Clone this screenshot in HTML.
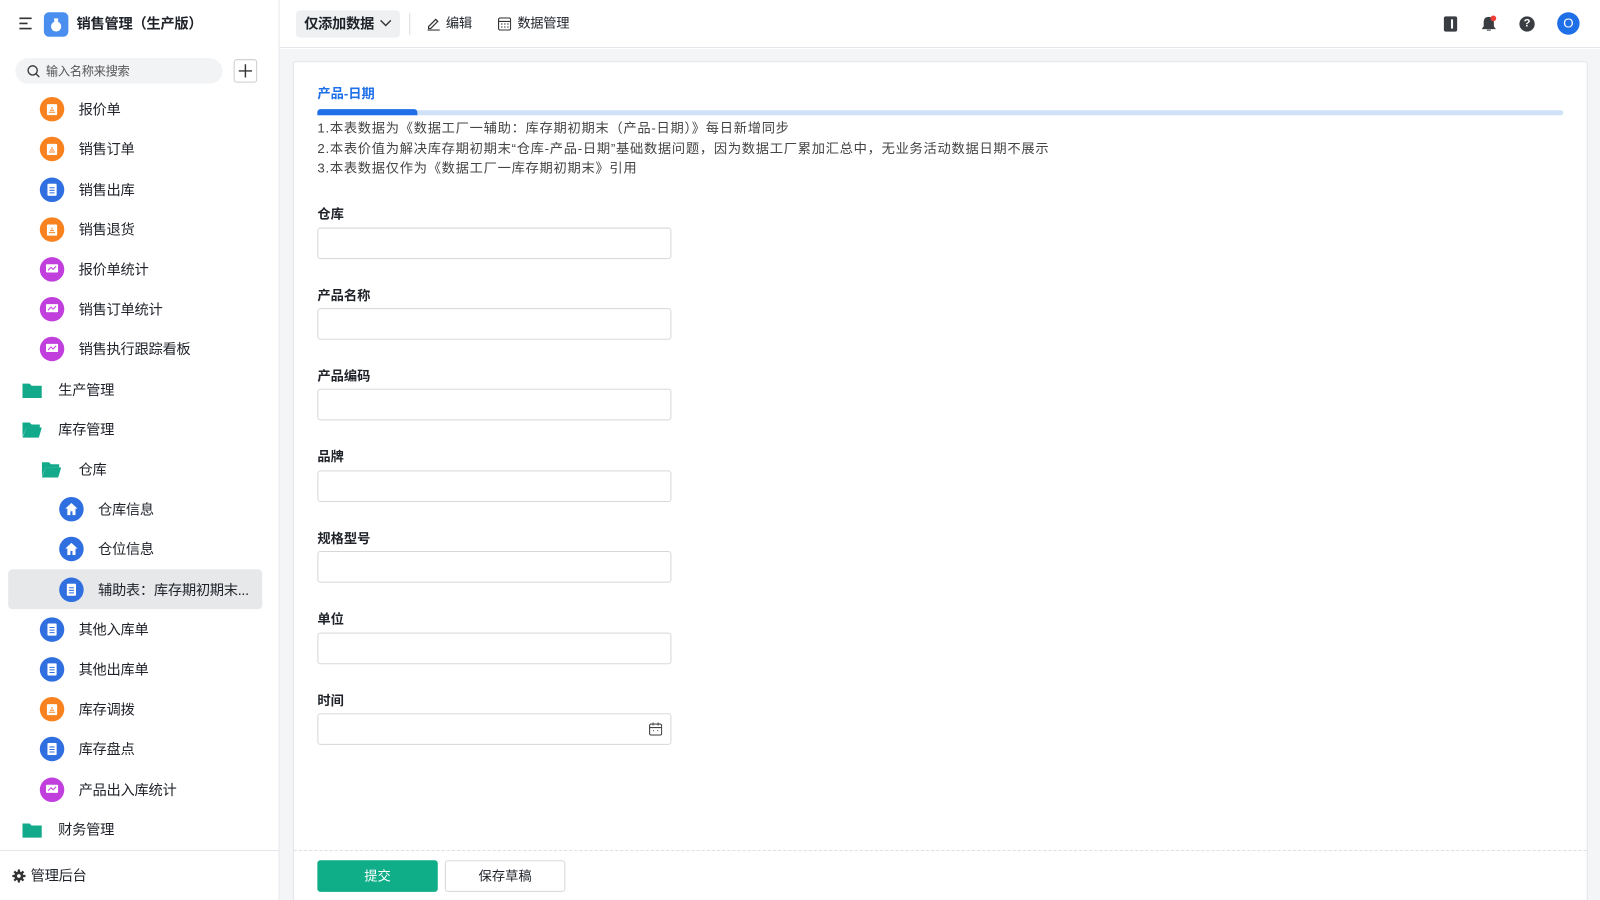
<!DOCTYPE html>
<html><head><meta charset="utf-8"><style>
*{box-sizing:border-box;margin:0;padding:0}
html,body{width:1600px;height:900px;overflow:hidden;background:#fff}
body{font-family:"Liberation Sans","Noto Sans CJK SC",sans-serif;color:#1f2329}
#w{position:absolute;left:0;top:0;width:1568px;height:882px;transform:scale(1.02041);transform-origin:0 0;overflow:hidden}
.a{position:absolute}
.side{left:0;top:0;width:274px;height:882px;border-right:1px solid #e5e6eb;background:#fff}
.it{position:absolute;font-size:14px;line-height:20px;color:#1f2329;letter-spacing:-0.3px}
.ic{position:absolute;width:24px;height:24px;border-radius:50%}
.ic svg{position:absolute;left:6px;top:6px}
.lbl{position:absolute;left:311px;font-size:13px;font-weight:bold;color:#1f2329}
.inp{position:absolute;left:311px;width:347px;height:31px;border:1px solid #d6d8dc;border-radius:3px;background:#fff}
</style></head><body><div id="w">
<!-- sidebar -->
<div class="a side">
 <svg class="a" style="left:18px;top:16px" width="15" height="14" viewBox="0 0 15 14"><path d="M1 2h12M1 7h8M1 12h12" stroke="#333" stroke-width="1.6"/></svg>
 <div class="a" style="left:43px;top:12px;width:24px;height:24px;border-radius:5px;background:#4a8ef0"><svg width="24" height="24"><circle cx="12" cy="14" r="5" fill="#fff"/><rect x="10" y="6" width="4" height="3" fill="#fff"/></svg></div>
 <div class="it" style="left:75px;top:13px;font-weight:bold">销售管理（生产版）</div>
 <div class="a" style="left:15px;top:57px;width:203px;height:25px;border-radius:13px;background:#f2f3f5"></div>
 <svg class="a" style="left:26px;top:63px" width="14" height="14"><circle cx="6" cy="6" r="4.5" stroke="#333" stroke-width="1.3" fill="none"/><path d="M9.5 9.5l3 3" stroke="#333" stroke-width="1.3"/></svg>
 <div class="it" style="left:45px;top:60px;font-size:12px;color:#555">输入名称来搜索</div>
 <div class="a" style="left:229px;top:58px;width:23px;height:23px;border:1px solid #ccc;border-radius:3px"><svg width="21" height="21"><path d="M10.5 4v13M4 10.5h13" stroke="#333" stroke-width="1.4"/></svg></div>

 <div class="a" style="left:8px;top:558px;width:249px;height:39px;border-radius:4px;background:#e7e8ea"></div>

 <div class="ic" style="left:39px;top:95px;background:#f7821f"><svg width="12" height="12"><rect x="1" y="1" width="10" height="11" rx="1" fill="#fff"/><path d="M6 4v2M3 9h6M4 7h4" stroke="#f7821f"/></svg></div><div class="it" style="left:77px;top:97px">报价单</div>
 <div class="ic" style="left:39px;top:134px;background:#f7821f"><svg width="12" height="12"><rect x="1" y="1" width="10" height="11" rx="1" fill="#fff"/><path d="M6 4v2M3 9h6M4 7h4" stroke="#f7821f"/></svg></div><div class="it" style="left:77px;top:136px">销售订单</div>
 <div class="ic" style="left:39px;top:174px;background:#2f6fe0"><svg width="12" height="12"><rect x="1.5" y="0" width="9" height="12" rx="1" fill="#fff"/><path d="M3.5 4h5M3.5 6.5h5M3.5 9h5" stroke="#2f6fe0"/></svg></div><div class="it" style="left:77px;top:176px">销售出库</div>
 <div class="ic" style="left:39px;top:213px;background:#f7821f"><svg width="12" height="12"><rect x="1" y="1" width="10" height="11" rx="1" fill="#fff"/><path d="M6 4v2M3 9h6M4 7h4" stroke="#f7821f"/></svg></div><div class="it" style="left:77px;top:215px">销售退货</div>
 <div class="ic" style="left:39px;top:252px;background:#c13fdc"><svg width="12" height="12"><rect x="0" y="1" width="12" height="8" rx="1" fill="#fff"/><path d="M2 7l3-3 2 2 3-3M6 9v2M3 11.5h6" stroke="#c13fdc" fill="none"/></svg></div><div class="it" style="left:77px;top:254px">报价单统计</div>
 <div class="ic" style="left:39px;top:291px;background:#c13fdc"><svg width="12" height="12"><rect x="0" y="1" width="12" height="8" rx="1" fill="#fff"/><path d="M2 7l3-3 2 2 3-3M6 9v2M3 11.5h6" stroke="#c13fdc" fill="none"/></svg></div><div class="it" style="left:77px;top:293px">销售订单统计</div>
 <div class="ic" style="left:39px;top:330px;background:#c13fdc"><svg width="12" height="12"><rect x="0" y="1" width="12" height="8" rx="1" fill="#fff"/><path d="M2 7l3-3 2 2 3-3M6 9v2M3 11.5h6" stroke="#c13fdc" fill="none"/></svg></div><div class="it" style="left:77px;top:332px">销售执行跟踪看板</div>

 <svg class="a" style="left:22px;top:374px" width="19" height="16"><path d="M0 2h7l2 2h10v12H0z" fill="#13a98b"/></svg><div class="it" style="left:57px;top:372px">生产管理</div>
 <svg class="a" style="left:22px;top:413px" width="19" height="16"><path d="M0 1h7l2 2h8v3H4L0 15z" fill="#13a98b"/><path d="M4 6h15l-3 10H0z" fill="#13a98b"/></svg><div class="it" style="left:57px;top:411px">库存管理</div>
 <svg class="a" style="left:41px;top:452px" width="19" height="16"><path d="M0 1h7l2 2h8v3H4L0 15z" fill="#13a98b"/><path d="M4 6h15l-3 10H0z" fill="#13a98b"/></svg><div class="it" style="left:77px;top:450px">仓库</div>
 <div class="ic" style="left:58px;top:487px;background:#2f6fe0"><svg width="12" height="12"><path d="M6 0L0 5.5h2V12h3V8h2v4h3V5.5h2z" fill="#fff"/></svg></div><div class="it" style="left:96px;top:489px">仓库信息</div>
 <div class="ic" style="left:58px;top:526px;background:#2f6fe0"><svg width="12" height="12"><path d="M6 0L0 5.5h2V12h3V8h2v4h3V5.5h2z" fill="#fff"/></svg></div><div class="it" style="left:96px;top:528px">仓位信息</div>
 <div class="ic" style="left:58px;top:566px;background:#2f6fe0"><svg width="12" height="12"><rect x="1.5" y="0" width="9" height="12" rx="1" fill="#fff"/><path d="M3.5 4h5M3.5 6.5h5M3.5 9h5" stroke="#2f6fe0"/></svg></div><div class="it" style="left:96px;top:568px">辅助表：库存期初期末...</div>
 <div class="ic" style="left:39px;top:605px;background:#2f6fe0"><svg width="12" height="12"><rect x="1.5" y="0" width="9" height="12" rx="1" fill="#fff"/><path d="M3.5 4h5M3.5 6.5h5M3.5 9h5" stroke="#2f6fe0"/></svg></div><div class="it" style="left:77px;top:607px">其他入库单</div>
 <div class="ic" style="left:39px;top:644px;background:#2f6fe0"><svg width="12" height="12"><rect x="1.5" y="0" width="9" height="12" rx="1" fill="#fff"/><path d="M3.5 4h5M3.5 6.5h5M3.5 9h5" stroke="#2f6fe0"/></svg></div><div class="it" style="left:77px;top:646px">其他出库单</div>
 <div class="ic" style="left:39px;top:683px;background:#f7821f"><svg width="12" height="12"><rect x="1" y="1" width="10" height="11" rx="1" fill="#fff"/><path d="M6 4v2M3 9h6M4 7h4" stroke="#f7821f"/></svg></div><div class="it" style="left:77px;top:685px">库存调拨</div>
 <div class="ic" style="left:39px;top:722px;background:#2f6fe0"><svg width="12" height="12"><rect x="1.5" y="0" width="9" height="12" rx="1" fill="#fff"/><path d="M3.5 4h5M3.5 6.5h5M3.5 9h5" stroke="#2f6fe0"/></svg></div><div class="it" style="left:77px;top:724px">库存盘点</div>
 <div class="ic" style="left:39px;top:762px;background:#c13fdc"><svg width="12" height="12"><rect x="0" y="1" width="12" height="8" rx="1" fill="#fff"/><path d="M2 7l3-3 2 2 3-3M6 9v2M3 11.5h6" stroke="#c13fdc" fill="none"/></svg></div><div class="it" style="left:77px;top:764px">产品出入库统计</div>
 <svg class="a" style="left:22px;top:805px" width="19" height="16"><path d="M0 2h7l2 2h10v12H0z" fill="#13a98b"/></svg><div class="it" style="left:57px;top:803px">财务管理</div>

 <div class="a" style="left:0;top:833px;width:273px;border-top:1px solid #e5e6eb"></div>
 <svg class="a" style="left:12px;top:852px" width="13" height="13" viewBox="0 0 13 13"><circle cx="6.5" cy="6.5" r="4.5" fill="#333"/><path d="M6.5 0v13M0 6.5h13M2 2l9 9M11 2l-9 9" stroke="#333" stroke-width="2.2"/><circle cx="6.5" cy="6.5" r="1.8" fill="#fff"/></svg>
 <div class="it" style="left:30px;top:848px">管理后台</div>
</div>

<!-- topbar -->
<div class="a" style="left:274px;top:0;width:1294px;height:47px;border-bottom:1px solid #e5e6eb;background:#fff"></div>
<div class="a" style="left:290px;top:10px;width:102px;height:27px;border-radius:4px;background:#eef0f2"></div>
<div class="it" style="left:298px;top:13px;font-weight:bold">仅添加数据</div>
<svg class="a" style="left:372px;top:19px" width="12" height="8"><path d="M1 1l5 5 5-5" stroke="#333" stroke-width="1.4" fill="none"/></svg>
<div class="a" style="left:401px;top:13px;height:21px;border-left:1px solid #ddd"></div>
<svg class="a" style="left:418px;top:16px" width="14" height="14"><path d="M2 10l7-7 2 2-7 7H2zM1 13.5h12" stroke="#333" stroke-width="1.2" fill="none"/></svg>
<div class="it" style="left:437px;top:13px;font-size:13px">编辑</div>
<svg class="a" style="left:488px;top:17px" width="13" height="13"><rect x="0.6" y="0.6" width="11.8" height="11.8" rx="1.5" stroke="#333" fill="none" stroke-width="1.1"/><path d="M0.6 4h12M3 6.5h1.5M6 6.5h1.5M9 6.5h1.5M3 9.5h1.5M6 9.5h1.5M9 9.5h1.5" stroke="#333"/></svg>
<div class="it" style="left:507px;top:13px;font-size:13px">数据管理</div>
<div class="a" style="left:1415px;top:16px;width:13px;height:15px;border-radius:2px;background:#3a3d42"><div class="a" style="left:7px;top:3px;width:2px;height:9px;background:#fff"></div></div>
<svg class="a" style="left:1452px;top:15px" width="15" height="17"><path d="M7 2c-3 0-4.5 2-4.5 5v4L1 13h12l-1.5-2V7C11.5 4 10 2 7 2zM5 14.5h4" fill="#3a3d42" stroke="#3a3d42"/><circle cx="11.5" cy="3" r="2.8" fill="#ef3e36"/></svg>
<div class="a" style="left:1489px;top:16px;width:15px;height:15px;border-radius:50%;background:#3a3d42;color:#fff;font-size:11px;font-weight:bold;text-align:center;line-height:15px">?</div>
<div class="a" style="left:1526px;top:12px;width:22px;height:22px;border-radius:50%;background:#1e6fe8;color:#fff;font-size:13px;text-align:center;line-height:22px">O</div>

<!-- content -->
<div class="a" style="left:274px;top:48px;width:1294px;height:834px;background:#f4f5f6"></div>
<div class="a" style="left:287px;top:60px;width:1269px;height:830px;background:#fff;border:1px solid #e3e5e8;border-radius:3px"></div>
<div class="it" style="left:311px;top:82px;font-size:13px;font-weight:bold;color:#1e6fe8;letter-spacing:0">产品-日期</div>
<div class="a" style="left:311px;top:108px;width:1221px;height:5px;border-radius:3px;background:#cfe0f7"></div>
<div class="a" style="left:311px;top:107px;width:98px;height:6px;border-radius:3px 3px 0 0;background:#1e6fe8"></div>
<div class="it" style="left:311px;top:116px;font-size:13px;line-height:19.5px;color:#444;letter-spacing:0.7px">1.本表数据为《数据工厂一辅助：库存期初期末（产品-日期）》每日新增同步<br>2.本表价值为解决库存期初期末“仓库-产品-日期”基础数据问题，因为数据工厂累加汇总中，无业务活动数据日期不展示<br>3.本表数据仅作为《数据工厂一库存期初期末》引用</div>

<div class="lbl" style="top:199px">仓库</div><div class="inp" style="top:223px"></div>
<div class="lbl" style="top:279px">产品名称</div><div class="inp" style="top:302px"></div>
<div class="lbl" style="top:358px">产品编码</div><div class="inp" style="top:381px"></div>
<div class="lbl" style="top:437px">品牌</div><div class="inp" style="top:461px"></div>
<div class="lbl" style="top:517px">规格型号</div><div class="inp" style="top:540px"></div>
<div class="lbl" style="top:596px">单位</div><div class="inp" style="top:620px"></div>
<div class="lbl" style="top:676px">时间</div><div class="inp" style="top:699px"></div>
<svg class="a" style="left:636px;top:708px" width="13" height="13"><rect x="0.6" y="1.6" width="11.8" height="10.8" rx="1.5" stroke="#444" fill="none" stroke-width="1.1"/><path d="M0.6 5h12M4 0v3M9 0v3M4 8h1M8 8h1" stroke="#444"/></svg>

<div class="a" style="left:288px;top:833px;width:1267px;border-top:1px dashed #dcdfe3"></div>
<div class="a" style="left:311px;top:843px;width:118px;height:31px;border-radius:3px;background:#0fae88;color:#fff;font-size:13px;text-align:center;line-height:31px">提交</div>
<div class="a" style="left:436px;top:843px;width:118px;height:31px;border-radius:3px;border:1px solid #d6d8dc;color:#1f2329;font-size:13px;text-align:center;line-height:29px">保存草稿</div>
</div></body></html>
